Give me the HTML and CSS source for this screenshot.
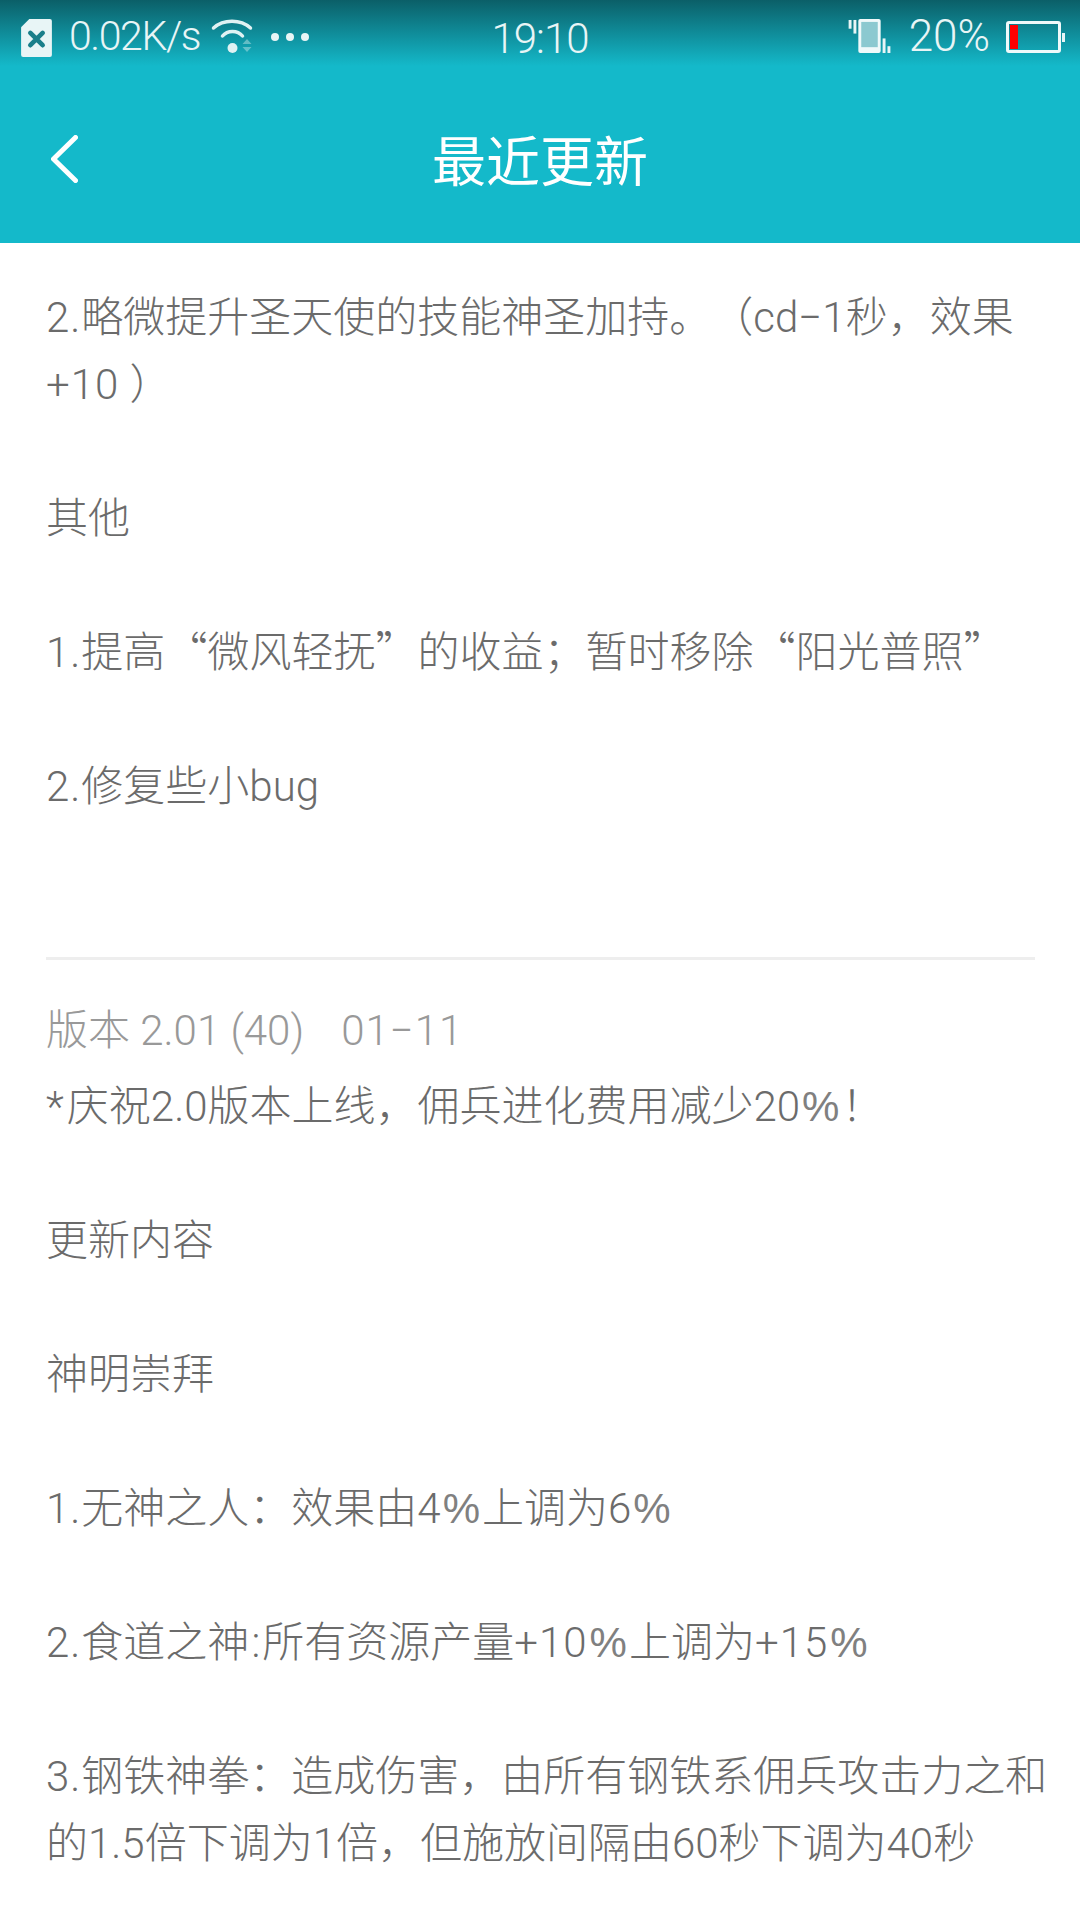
FILE: index.html
```html
<!DOCTYPE html>
<html>
<head>
	<title>最近更新</title>
	<link rel="stylesheet" href="styles.css">
</head>
<body>
	<div class="header">
		<div class="status">
			<div class="status-left">
				<svg class="sim" width="31" height="38" viewBox="0 0 30 37">
					<path d="M8 0H28a2 2 0 0 1 2 2V35a2 2 0 0 1-2 2H2a2 2 0 0 1-2-2V8Z" fill="#e8f5f6"/>
					<path d="M9 13.500L21 25.500M21 13.500L9 25.500" stroke="#1a7f8a" stroke-width="4.500" stroke-linecap="round"/>
				</svg>
				<span class="speed">0.02K/s</span>
				<svg class="wifi" width="42" height="34" viewBox="0 0 41 34">
					<path d="M2 9C12 0 29 0 39 9" fill="none" stroke="#e0f2f3" stroke-width="3.500" stroke-linecap="round"/>
					<path d="M11 17C16 11 26 11 31 17" fill="none" stroke="#e0f2f3" stroke-width="3.500" stroke-linecap="round"/>
					<circle cx="21" cy="29" r="5" fill="#e0f2f3"/>
					<path d="M31 25L35.500 20L40 25ZM31 28H40L35.500 33Z" fill="#e0f2f3" opacity=".4"/>
				</svg>
				<div class="dots"><i></i><i></i><i></i></div>
			</div>
			<div class="clock">19:10</div>
			<div class="status-right">
				<svg class="vibrate" width="43" height="34" viewBox="0 0 43 35">
					<rect x="0" y="1" width="3" height="9" fill="#e8f5f6"/>
					<rect x="5" y="1" width="3" height="14" fill="#e8f5f6"/>
					<rect x="10" y="0" width="23" height="35" rx="2" fill="#f0f9fa"/>
					<rect x="13" y="3" width="17" height="26" fill="#8cc9d0"/>
					<rect x="35" y="20" width="3" height="15" fill="#e8f5f6"/>
					<rect x="40" y="28" width="3" height="7" fill="#e8f5f6"/>
				</svg>
				<span class="percent">20%</span>
				<div class="battery"><div class="battery-level"></div></div>
				<div class="battery-tip"></div>
			</div>
		</div>
		<div class="titlebar">
			<svg class="back" width="27" height="48" viewBox="0 0 27 48">
				<path d="M24.500 2.500L2.500 24L24.500 45.500" fill="none" stroke="#fff" stroke-width="5" stroke-linecap="round" stroke-linejoin="round"/>
			</svg>
			<div class="title">最近更新</div>
		</div>
	</div>
	<div class="content">
		<p class="notes first"><span class="num">2.</span>略微提升圣天使的技能神圣加持。（cd−1秒，效果<br><span class="num">+10</span> ）<br><br>其他<br><br><span class="num">1.</span>提高<span class="cjk">“</span>微风轻抚<span class="cjk">”</span>的收益；暂时移除<span class="cjk">“</span>阳光普照<span class="cjk">”</span><br><br><span class="num">2.</span>修复些小bug</p>
		<div class="divider"></div>
		<div class="version">版本 2.01 (40)<span class="date">01−11</span></div>
		<p class="notes"><span class="star">*</span>庆祝2.0版本上线，佣兵进化费用减少20<span class="pct">%</span>！<br><br>更新内容<br><br>神明崇拜<br><br><span class="num">1.</span>无神之人：效果由4<span class="pct">%</span>上调为6<span class="pct">%</span><br><br><span class="num">2.</span>食道之神<span class="colon">:</span>所有资源产量<span class="num">+10</span><span class="pct">%</span>上调为<span class="num">+15</span><span class="pct">%</span><br><br><span class="num">3.</span>钢铁神拳：造成伤害，由所有钢铁系佣兵攻击力之和<br>的1.5倍下调为1倍，但施放间隔由60秒下调为40秒</p>
	</div>
</body>
</html>
```
FILE: styles.css
```css
html, body {
	margin: 0;
	height: 1920px;
	overflow: hidden;
	background: #fff;
}
body {
	font-family: Roboto, "Noto Sans CJK SC", sans-serif;
	font-weight: 300;
	text-spacing-trim: space-all;
}
.header {
	height: 243px;
	background: linear-gradient(#0b5f68 0, #14b9ca 66px);
	color: #e8f5f6;
}
.status {
	height: 76px;
	display: grid;
	grid-template-columns: 1fr auto 1fr;
	align-items: center;
	font-size: 41px;
}
.status-left {
	display: flex;
	align-items: center;
	padding-left: 21px;
}
.speed {
	margin-left: 17px;
	padding-bottom: 4px;
	letter-spacing: -1.400px;
}
.wifi {
	margin-left: 11px;
	margin-bottom: 4px;
}
.dots {
	display: flex;
	gap: 7px;
	margin-left: 18px;
	margin-bottom: 2px;
}
.dots i {
	width: 8px;
	height: 8px;
	border-radius: 50%;
	background: #e8f5f6;
}
.clock {
	font-size: 42px;
	letter-spacing: -1px;
}
.status-right {
	display: flex;
	align-items: center;
	justify-content: flex-end;
	padding-right: 15px;
}
.vibrate {
	margin-bottom: 4px;
}
.percent {
	margin-left: 18px;
	padding-bottom: 4px;
	font-size: 44px;
}
.battery {
	box-sizing: border-box;
	width: 55px;
	height: 32px;
	margin-left: 16px;
	margin-bottom: 2px;
	padding: 1px;
	border: 3px solid #f0f9fa;
	border-radius: 3px;
	flex: none;
}
.battery-level {
	width: 8px;
	height: 24px;
	background: #f00;
}
.battery-tip {
	width: 3px;
	height: 9px;
	margin-left: 1px;
	margin-bottom: 2px;
	background: #e8f5f6;
	flex: none;
}
.titlebar {
	position: relative;
	height: 167px;
	padding-bottom: 3px;
	display: flex;
	align-items: center;
	justify-content: center;
	box-sizing: border-box;
}
.back {
	position: absolute;
	left: 51px;
	top: 59px;
}
.title {
	color: #fff;
	font-size: 54px;
	font-weight: 400;
}
.content {
	padding: 0 26px 0 46px;
	color: #6b6b6b;
	font-size: 42px;
}
.notes {
	margin: 0;
	line-height: 67px;
	white-space: nowrap;
}
.notes.first {
	margin-top: 41px;
}
.num {
	letter-spacing: 1px;
}
.star {
	letter-spacing: 3px;
}
.colon {
	margin: 0 2px;
}
.cjk {
	font-family: "Noto Sans CJK SC", sans-serif;
	line-height: 0;
}
.pct {
	font-family: "Liberation Sans", sans-serif;
	font-weight: 400;
	color: #808080;
	line-height: 0;
	margin: 0 2px;
}
.divider {
	height: 3px;
	margin: 137px 19px 0 0;
	background: #eee;
}
.version {
	margin-top: 28px;
	color: #999;
	line-height: 85px;
}
.date {
	margin-left: 37px;
	letter-spacing: 1px;
}
```
